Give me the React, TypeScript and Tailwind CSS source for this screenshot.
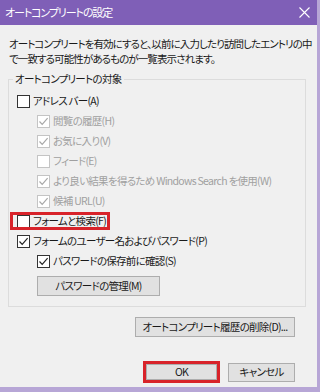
import React from "react";

function Check({ checked, disabled }: { checked?: boolean; disabled?: boolean }) {
	return (
		<span
			className={`w-[13px] h-[13px] shrink-0 bg-white border flex items-center justify-center ${disabled ? "border-[#c4c4c4]" : "border-[#333333]"}`}
		>
			{checked && (
				<svg width="11" height="11" viewBox="0 0 11 11">
					<path
						d="M1.5 5.5 L4.2 8.3 L9.6 2.2"
						fill="none"
						stroke={disabled ? "#a8a8a8" : "#222222"}
						strokeWidth="1.2"
					/>
				</svg>
			)}
		</span>
	);
}

function Row({
	label,
	checked,
	disabled,
	indent,
}: {
	label: string;
	checked?: boolean;
	disabled?: boolean;
	indent?: boolean;
}) {
	return (
		<div className={`h-[20px] flex items-center gap-[3px] whitespace-nowrap ${indent ? "pl-[28px]" : "pl-[8px]"}`}>
			<Check checked={checked} disabled={disabled} />
			<span className={disabled ? "text-[#a0a0a0]" : "text-[#1a1a1a]"}>{label}</span>
		</div>
	);
}

function Btn({ label, className }: { label: string; className: string }) {
	return (
		<div
			className={`bg-[#e1e1e1] border border-[#adadad] flex items-center justify-center whitespace-nowrap text-[#1a1a1a] ${className}`}
		>
			{label}
		</div>
	);
}

export default function App() {
	return (
		<div className="w-[320px] h-[392px] bg-[#f0f0f0] border-r-[3px] border-b-[5px] border-[#b7a6d6] flex flex-col font-['Noto_Sans_CJK_JP','Meiryo_UI',sans-serif] text-[10.5px] tracking-[-0.7px] [font-feature-settings:'palt'] overflow-hidden">
			{/* Title bar */}
			<div className="h-[25px] shrink-0 bg-[#7f5fb7] flex items-center justify-between pl-[5px] pr-[7px] text-white text-[11px] tracking-[-1.1px] whitespace-nowrap">
				<span>オートコンプリートの設定</span>
				<svg width="11" height="11" viewBox="0 0 11 11">
					<path d="M0.5 0.5 L10.5 10.5 M10.5 0.5 L0.5 10.5" stroke="#ffffff" strokeWidth="1.1" />
				</svg>
			</div>

			{/* Description */}
			<div className="pl-[9px] pt-[11px] leading-[15px] text-[#1a1a1a] text-[10.5px] tracking-[-0.9px] whitespace-nowrap">
				<p>オートコンプリートを有効にすると、以前に入力したり訪問したエントリの中</p>
				<p>で一致する可能性があるものが一覧表示されます。</p>
			</div>

			{/* Group box */}
			<div className="relative ml-[8px] mt-[13px] w-[298px] h-[228px] border border-[#dcdcdc] pt-[11px]">
				<span className="absolute left-[4px] top-[-9px] px-[2px] bg-[#f0f0f0] leading-[16px] text-[#1a1a1a] whitespace-nowrap">
					オートコンプリートの対象
				</span>
				<Row label="アドレス バー(A)" />
				<Row label="閲覧の履歴(H)" checked disabled indent />
				<Row label="お気に入り(V)" checked disabled indent />
				<Row label="フィード(E)" disabled indent />
				<Row label="より良い結果を得るため Windows Search を使用(W)" checked disabled indent />
				<Row label="候補 URL(U)" checked disabled indent />
				<div className="relative w-fit">
					<Row label="フォームと検索(F)" />
					<span className="absolute left-[1px] right-[-4px] top-[1px] bottom-[1px] border-[3px] border-[#d8232a]" />
				</div>
				<Row label="フォームのユーザー名およびパスワード(P)" checked />
				<Row label="パスワードの保存前に確認(S)" checked indent />
				<Btn label="パスワードの管理(M)" className="ml-[28px] mt-[5px] w-[123px] h-[20px]" />
			</div>

			{/* Delete history */}
			<div className="flex justify-end pr-[22px] mt-[10px]">
				<Btn label="オートコンプリート履歴の削除(D)..." className="w-[160px] h-[20px]" />
			</div>

			{/* OK / Cancel */}
			<div className="flex justify-end items-center gap-[8px] pr-[22px] mt-[24px]">
				<div className="border-[3px] border-[#d8232a]">
					<Btn label="OK" className="w-[71px] h-[16px]" />
				</div>
				<Btn label="キャンセル" className="w-[67px] h-[19px]" />
			</div>
		</div>
	);
}
